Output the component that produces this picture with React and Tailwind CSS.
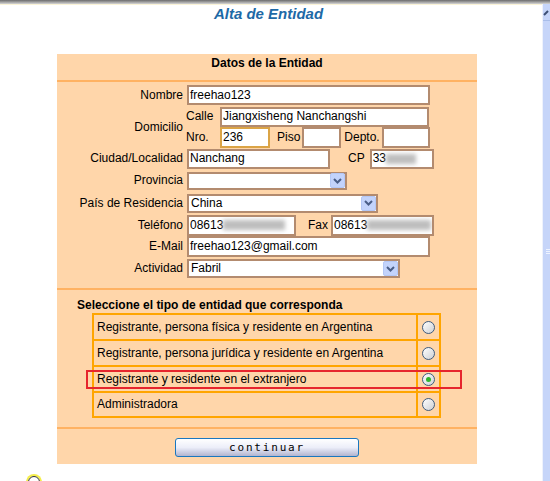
import React from 'react';

const Field = ({ w, h = 'h-[20px]', focus, children }) => (
  <div
    className={`${w} ${h} flex items-center overflow-hidden whitespace-nowrap bg-white border-2 pl-[1px] text-black ${
      focus ? 'border-[#dba446]' : 'border-[#b38b6f]'
    }`}
  >
    {children}
  </div>
);

const Select = ({ w, h = 'h-[19px]', value }) => (
  <div className={`${w} ${h} flex items-center justify-between bg-white border-2 border-[#b38b6f] text-black`}>
    <span className="pl-[2px]">{value}</span>
    <div className="w-[15px] h-[15px] mr-[0px] rounded-[2px] bg-[#c3d3fb] border border-[#b4c7f5] flex items-center justify-center">
      <svg width="9" height="6" viewBox="0 0 9 6">
        <path d="M1 1 L4.5 4.5 L8 1" fill="none" stroke="#4a5e88" strokeWidth="2" />
      </svg>
    </div>
  </div>
);

const Blur = ({ w }) => <span className={`inline-block ${w} h-[10px] bg-[#bdbdbd] blur-[2px]`} />;

const Row = ({ label, h, children }) => (
  <div className={`flex items-center ${h}`}>
    <div className="w-[130px] pr-[4px] text-right">{label}</div>
    <div className="flex items-center">{children}</div>
  </div>
);

const Radio = ({ checked }) => (
  <div className="w-[13px] h-[13px] rounded-full border border-[#3e5b7e] bg-linear-to-br from-white to-[#cdd0d4] flex items-center justify-center">
    {checked && <div className="w-[5px] h-[5px] rounded-full bg-[#2fb52f]" />}
  </div>
);

const tipos = [
  { text: 'Registrante, persona física y residente en Argentina', h: 'h-[24px]' },
  { text: 'Registrante, persona jurídica y residente en Argentina', h: 'h-[24px]' },
  { text: 'Registrante y residente en el extranjero', h: 'h-[24px]', checked: true },
  { text: 'Administradora', h: 'h-[23px]' },
];

export default function App() {
  return (
    <div className="w-[550px] h-[481px] overflow-hidden bg-white flex flex-col text-[12px] leading-[15px] text-black font-['Liberation_Sans',Arial,sans-serif]">
      <div className="h-[4px] bg-linear-to-b from-[#6c6c6c] to-[#d6d6d6]" />
      <div className="flex flex-1 min-h-0">
        <main className="flex-1 border-t border-[#fbf4d8]">
          {/* Titulo */}
          <div className="ml-[57px] w-[420px] pl-[3px] text-center h-[18px] leading-[18px] text-[15px] font-bold italic text-[#1d69a6]">
            Alta de Entidad
          </div>

          {/* Panel */}
          <div className="ml-[57px] mt-[31px] w-[420px] bg-[#ffd6aa]">
            <div className="h-[26px] pt-[2px] text-center font-bold">Datos de la Entidad</div>
            <div className="h-[2px] bg-[#ffb262]" />

            <div className="pt-[2px] pb-[8px]">
              <Row label="Nombre" h="h-[22px]">
                <Field w="w-[243px]">freehao123</Field>
              </Row>

              <div className="flex">
                <div className="w-[130px] pr-[4px] text-right self-center">Domicilio</div>
                <div className="flex flex-col">
                  <div className="flex items-center h-[21px]">
                    <span className="w-[34px] -ml-[1px]">Calle</span>
                    <Field w="w-[209px]" h="h-[20px]">Jiangxisheng Nanchangshi</Field>
                  </div>
                  <div className="flex items-center h-[21px]">
                    <span className="w-[34px] -ml-[1px]">Nro.</span>
                    <Field w="w-[50px]" h="h-[21px]" focus>
                      236
                    </Field>
                    <span className="ml-[7px]">Piso</span>
                    <div className="ml-[2px]">
                      <Field w="w-[39px]" h="h-[21px]" />
                    </div>
                    <span className="ml-[3px]">Depto.</span>
                    <div className="ml-[2px]">
                      <Field w="w-[48px]" h="h-[21px]" />
                    </div>
                  </div>
                </div>
              </div>

              <Row label="Ciudad/Localidad" h="h-[21px]">
                <Field w="w-[143px]">Nanchang</Field>
                <span className="ml-[18px]">CP</span>
                <div className="ml-[5px]">
                  <Field w="w-[64px]">
                    33
                    <Blur w="w-[30px]" />
                  </Field>
                </div>
              </Row>

              <Row label="Provincia" h="h-[23px]">
                <Select w="w-[160px]" h="h-[18px]" value="" />
              </Row>

              <Row label="País de Residencia" h="h-[22px]">
                <Select w="w-[191px]" value="China" />
              </Row>

              <Row label="Teléfono" h="h-[22px]">
                <Field w="w-[109px]" h="h-[21px]">
                  08613
                  <Blur w="w-[62px]" />
                </Field>
                <span className="ml-[12px]">Fax</span>
                <div className="ml-[3px]">
                  <Field w="w-[103px]" h="h-[21px]">
                    08613
                    <Blur w="w-[64px]" />
                  </Field>
                </div>
              </Row>

              <Row label="E-Mail" h="h-[21px]">
                <Field w="w-[243px]" h="h-[21px]">freehao123@gmail.com</Field>
              </Row>

              <Row label="Actividad" h="h-[23px]">
                <Select w="w-[213px]" value="Fabril" />
              </Row>
            </div>

            <div className="h-[2px] bg-[#ffb262]" />

            {/* Tipo de entidad */}
            <div className="pt-[8px] pb-[9px]">
              <div className="pl-[20px] h-[15px] font-bold">Seleccione el tipo de entidad que corresponda</div>
              <div className="relative ml-[35px] w-[349px] border-2 border-[#ffa500]">
                {tipos.map((t, i) => (
                  <div key={i} className={`flex ${i > 0 ? 'border-t-2 border-[#ffa500]' : ''}`}>
                    <div className={`flex-1 ${t.h} flex items-center pl-[3px]`}>{t.text}</div>
                    <div className={`w-[23px] ${t.h} border-l-2 border-[#ffa500] flex items-center justify-center`}>
                      <Radio checked={t.checked} />
                    </div>
                  </div>
                ))}
                <div className="absolute left-[-8px] top-[55px] w-[376px] h-[19px] border-2 border-[#e6252d]" />
              </div>
            </div>

            <div className="h-[2px] bg-[#ffb262]" />

            <div className="pt-[9px] pb-[7px] pl-[118px]">
              <button className="w-[184px] h-[19px] rounded-[3px] border border-[#1a77bf] bg-linear-to-b from-white via-[#eceef9] to-[#b2b4cf] flex items-center justify-center text-[11px] leading-none tracking-[1.8px] text-black font-['DejaVu_Sans_Mono',monospace]">
                continuar
              </button>
            </div>
          </div>

          <div className="ml-[28px] mt-[12px] w-[12px] h-[12px] rounded-full border border-[#333] ring-2 ring-[#f5ee4a]" />
        </main>

        {/* Barra de desplazamiento */}
        <div className="w-[8px] border-l border-[#eef2fc] bg-[#c6d5f9] flex flex-col">
          <div className="h-[17px] border-b border-[#a9bde9] flex items-center">
            <svg width="7" height="7" viewBox="0 0 7 7">
              <path d="M1 6 L5 2" stroke="#3d4f75" strokeWidth="2" />
            </svg>
          </div>
          <div className="mt-[228px] ml-[3px] flex flex-col gap-[1px]">
            <div className="h-[1px] w-[4px] bg-[#eef3ff]" />
            <div className="h-[1px] w-[4px] bg-[#eef3ff]" />
            <div className="h-[1px] w-[4px] bg-[#eef3ff]" />
          </div>
        </div>
      </div>
    </div>
  );
}
